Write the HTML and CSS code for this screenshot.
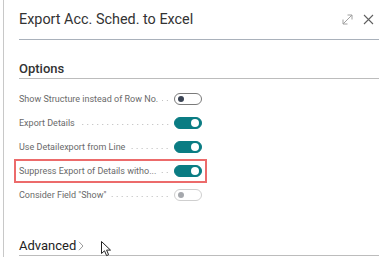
FILE: index.html
```html
<!DOCTYPE html>
<html lang="en">
<head>
  <meta charset="UTF-8" />
  <title>Export Acc. Sched. to Excel</title>
  <link rel="stylesheet" href="styles.css">
</head>
<body>
  <div class="dialog">
    <header class="dialog-head">
      <div class="title">Export Acc. Sched. to Excel</div>
      <div class="head-actions">
        <svg class="icon-expand" width="11" height="11" viewBox="0 0 11 11">
          <path d="M1 10 L10 1 M5.5 1 H10 V5.5 M1 5.5 V10 H5.5" fill="none" stroke="#a0a0a0" stroke-width="1"/>
        </svg>
        <svg class="icon-close" width="11" height="11" viewBox="0 0 11 11">
          <path d="M1 1 L10 10 M10 1 L1 10" fill="none" stroke="#606060" stroke-width="1.1"/>
        </svg>
      </div>
    </header>

    <section class="group">
      <div class="group-title">Options</div>
      <div class="fields">
        <div class="field">
          <span class="label">Show Structure instead of Row No.</span>
          <span class="leader"></span>
          <span class="toggle off"><i></i></span>
        </div>
        <div class="field">
          <span class="label">Export Details</span>
          <span class="leader"></span>
          <span class="toggle on"><i></i></span>
        </div>
        <div class="field">
          <span class="label">Use Detailexport from Line</span>
          <span class="leader"></span>
          <span class="toggle on"><i></i></span>
        </div>
        <div class="field marked">
          <span class="label">Suppress Export of Details witho...</span>
          <span class="leader"></span>
          <span class="toggle on"><i></i></span>
        </div>
        <div class="field">
          <span class="label">Consider Field "Show"</span>
          <span class="leader"></span>
          <span class="toggle disabled"><i></i></span>
        </div>
      </div>
    </section>

    <section class="group advanced">
      <div class="group-title">Advanced<svg class="chev" width="6" height="10" viewBox="0 0 6 10"><path d="M1 0.8 L5 5 L1 9.2" fill="none" stroke="#9a9a9a" stroke-width="1"/></svg></div>
    </section>

    <svg class="cursor" width="12" height="16" viewBox="0 0 12 16">
      <path d="M0.5 0.5 V12.5 L3.5 9.8 L5.6 14.6 L7.6 13.7 L5.6 9.1 L9.5 9.1 Z" fill="#fff" stroke="#222" stroke-width="1"/>
    </svg>
  </div>
</body>
</html>
```

FILE: styles.css
```css
* {
  box-sizing: border-box;
}

html, body {
  margin: 0;
  background: #fff;
}

body {
  width: 389px;
  height: 257px;
  overflow: hidden;
  font-family: Roboto, 'Open Sans', sans-serif;
}

.dialog {
  position: relative;
  margin-left: 3px;
  height: 257px;
  border-left: 1px solid #c8c8c8;
  padding: 0 10px 0 15px;
}

.dialog-head {
  display: flex;
  align-items: center;
  justify-content: space-between;
  height: 40px;
  border-bottom: 1px solid #a9b1bb;
}

.title {
  font-size: 14.4px;
  color: #333;
}

.head-actions {
  display: flex;
  align-items: center;
  gap: 10px;
  padding-right: 5px;
}

.group {
  margin-top: 20px;
}

.group-title {
  display: flex;
  align-items: center;
  font-size: 13px;
  line-height: 18px;
  font-weight: 500;
  color: #333;
  border-bottom: 1px solid #bcbcbc;
}

.fields {
  margin-top: 8px;
  width: 183px;
}

.field {
  display: flex;
  align-items: center;
  height: 24px;
  margin: 0 -5px;
  padding: 0 3px;
  border: 2px solid transparent;
}

.field.marked {
  border-color: #ec6b6b;
}

.label {
  font-size: 9px;
  color: #6a6a6a;
  white-space: nowrap;
}

.leader {
  flex: 1;
  min-width: 0;
  height: 1px;
  margin: 3px 4px 0 4px;
  background-image: radial-gradient(circle, #b8b8b8 0.6px, transparent 0.8px);
  background-size: 5px 1px;
  background-position: right;
  background-repeat: repeat-x;
}

.toggle {
  position: relative;
  flex: none;
  width: 28px;
  height: 12px;
  border-radius: 6px;
  border: 1px solid #7a7a7a;
  background: #fff;
}

.toggle i {
  position: absolute;
  top: 2px;
  left: 3px;
  width: 6px;
  height: 6px;
  border-radius: 50%;
  background: #3b4454;
}

.toggle.on {
  background: #0a7c83;
  border-color: #0a7c83;
}

.toggle.on i {
  left: auto;
  right: 2px;
  top: 1px;
  width: 8px;
  height: 8px;
  background: #fff;
}

.toggle.disabled {
  border-color: #cfcfcf;
}

.toggle.disabled i {
  background: #a5a8ad;
}

.advanced {
  margin-top: 30px;
}

.advanced .group-title {
  font-weight: 400;
  color: #222;
}

.chev {
  margin-left: 2px;
}

.cursor {
  position: absolute;
  left: 97px;
  top: 241px;
}
```
